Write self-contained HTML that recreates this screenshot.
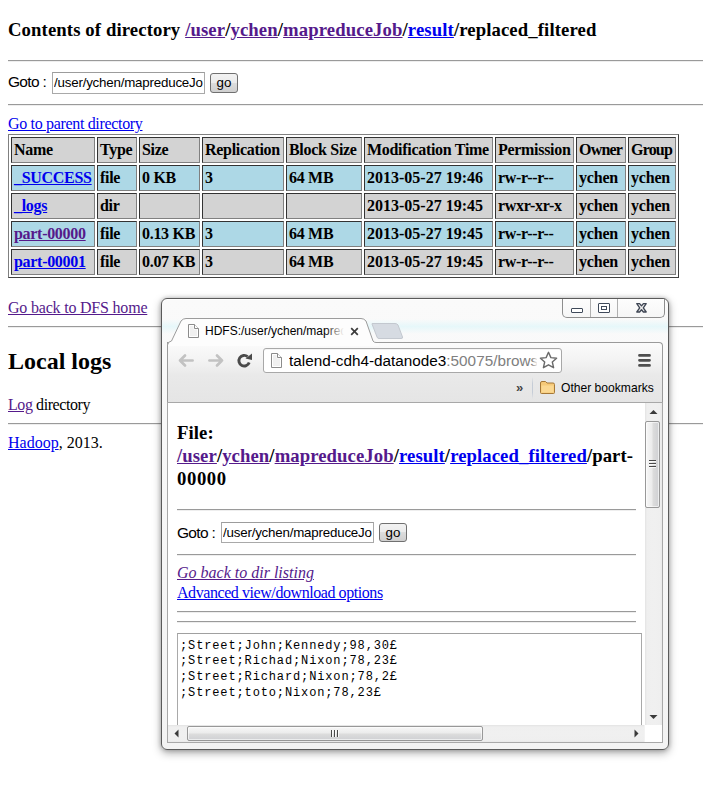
<!DOCTYPE html>
<html>
<head>
<meta charset="utf-8">
<style>
html,body{margin:0;padding:0;background:#fff;}
body{width:711px;height:787px;overflow:hidden;position:relative;font-family:"Liberation Serif",serif;font-size:16px;color:#000;}
a{color:#0000ee;text-decoration:underline;}
a.v{color:#551a8b;}
.abs{position:absolute;white-space:nowrap;}
.h3{font-size:18.72px;font-weight:bold;line-height:22px;}
.h2{font-size:24px;font-weight:bold;line-height:28px;}
.hr{position:absolute;height:0;border-top:1px solid #9a9a9a;border-bottom:1px solid #eeeeee;}
.t16{font-size:16px;line-height:20px;}
.sans{font-family:"Liberation Sans",sans-serif;}
.inp{position:absolute;box-sizing:border-box;border:1px solid #a9a9a9;border-top-color:#9c9c9c;background:#fff;font-family:"Liberation Sans",sans-serif;font-size:13.33px;line-height:20px;overflow:hidden;white-space:nowrap;padding-left:1px;letter-spacing:-0.2px;}
.btn{position:absolute;box-sizing:border-box;border:1px solid #707070;border-radius:3px;background:linear-gradient(#f2f2f2 0,#ebebeb 50%,#dddddd 50%,#cfcfcf 100%);font-family:"Liberation Sans",sans-serif;font-size:13.33px;text-align:center;line-height:18px;}
table.dt{position:absolute;left:8px;top:134px;table-layout:fixed;width:671px;border-collapse:separate;border-spacing:2px;border:1px solid;border-color:#808080 #404040 #404040 #808080;}
table.dt td{border:1px solid;border-color:#333 #808080 #808080 #333;padding:1px 2px 0 2px;height:26px;box-sizing:border-box;font-weight:bold;vertical-align:top;line-height:22px;white-space:nowrap;overflow:visible;letter-spacing:-0.3px;}
tr.g td{background:#d3d3d3;}
tr.b td{background:#add8e6;}
</style>
</head>
<body>
<!-- background page -->
<div class="abs h3" style="left:8px;top:19px;letter-spacing:0.11px;">Contents of directory <a class="v">/user</a>/<a class="v">ychen</a>/<a class="v">mapreduceJob</a>/<a>result</a>/replaced_filtered</div>
<div class="hr" style="left:8px;top:60px;width:695px;"></div>
<div class="abs sans" style="left:8px;top:72px;font-size:15.5px;line-height:20px;letter-spacing:-0.7px;">Goto :</div>
<div class="inp" style="left:52px;top:72px;width:153px;height:22px;"><div style="width:149px;overflow:hidden;">/user/ychen/mapreduceJob/result/replaced_filtered</div></div>
<div class="btn" style="left:210px;top:73px;width:28px;height:20px;">go</div>
<div class="hr" style="left:8px;top:104px;width:695px;"></div>
<div class="abs t16" style="left:8px;top:114px;letter-spacing:-0.33px;"><a>Go to parent directory</a></div>
<table class="dt">
<tr class="g"><td style="width:84px">Name</td><td style="width:40px">Type</td><td style="width:61px">Size</td><td style="width:82px">Replication</td><td style="width:76px">Block Size</td><td style="width:129px">Modification Time</td><td style="width:79px">Permission</td><td style="width:50px;letter-spacing:-0.8px">Owner</td><td style="width:48px;letter-spacing:-0.8px">Group</td></tr>
<tr class="b"><td><a>_SUCCESS</a></td><td>file</td><td>0 KB</td><td>3</td><td>64 MB</td><td style="letter-spacing:0px">2013-05-27 19:46</td><td>rw-r--r--</td><td style="letter-spacing:-0.2px">ychen</td><td style="letter-spacing:-0.2px">ychen</td></tr>
<tr class="g"><td><a>_logs</a></td><td>dir</td><td></td><td></td><td></td><td style="letter-spacing:0px">2013-05-27 19:45</td><td>rwxr-xr-x</td><td style="letter-spacing:-0.2px">ychen</td><td style="letter-spacing:-0.2px">ychen</td></tr>
<tr class="b"><td><a class="v">part-00000</a></td><td>file</td><td>0.13 KB</td><td>3</td><td>64 MB</td><td style="letter-spacing:0px">2013-05-27 19:45</td><td>rw-r--r--</td><td style="letter-spacing:-0.2px">ychen</td><td style="letter-spacing:-0.2px">ychen</td></tr>
<tr class="g"><td><a>part-00001</a></td><td>file</td><td>0.07 KB</td><td>3</td><td>64 MB</td><td style="letter-spacing:0px">2013-05-27 19:45</td><td>rw-r--r--</td><td style="letter-spacing:-0.2px">ychen</td><td style="letter-spacing:-0.2px">ychen</td></tr>
</table>
<div class="abs t16" style="left:8px;top:298px;letter-spacing:-0.2px;"><a class="v">Go back to DFS home</a></div>
<div class="hr" style="left:8px;top:326px;width:695px;"></div>
<div class="abs h2" style="left:8px;top:347px;">Local logs</div>
<div class="abs t16" style="left:8px;top:395px;letter-spacing:-0.42px;"><a class="v">Log</a> directory</div>
<div class="hr" style="left:8px;top:423px;width:695px;"></div>
<div class="abs t16" style="left:8px;top:433px;"><a>Hadoop</a>, 2013.</div>

<!-- chrome window -->
<div id="win" style="position:absolute;left:161px;top:298px;width:508px;height:452px;box-sizing:border-box;border:1px solid #5a5a5a;border-radius:6px;background:linear-gradient(#fafafa 0,#f6f6f6 60%,#f3f3f3 100%);box-shadow:inset 0 1px 0 #fff,0 3px 9px rgba(0,0,0,0.34),0 0 4px rgba(0,0,0,0.22);"></div>
<div style="position:absolute;left:162px;top:319px;width:506px;height:15px;background:linear-gradient(180deg,rgba(230,246,248,0) 0,rgba(228,247,250,0.9) 50%,rgba(230,246,248,0) 100%);"></div>
<!-- caption buttons -->
<div style="position:absolute;left:562px;top:299px;width:103px;height:19px;box-sizing:border-box;border:1px solid #8e8e8e;border-top:0;border-radius:0 0 5px 5px;background:linear-gradient(#fdfdfd,#f6f6f6);"></div>
<div style="position:absolute;left:590px;top:299px;width:1px;height:18px;background:#b0b0b0;"></div>
<div style="position:absolute;left:617px;top:299px;width:1px;height:18px;background:#b0b0b0;"></div>
<div style="position:absolute;left:571px;top:308px;width:12px;height:5px;box-sizing:border-box;border:1px solid #3f4a5a;border-radius:1px;background:#fff;"></div>
<div style="position:absolute;left:598px;top:303px;width:12px;height:10px;box-sizing:border-box;border:1px solid #3f4a5a;border-radius:1px;background:#fff;"></div>
<div style="position:absolute;left:601px;top:306px;width:6px;height:4px;box-sizing:border-box;border:1px solid #3f4a5a;"></div>
<svg style="position:absolute;left:635px;top:302px;" width="13" height="12" viewBox="0 0 13 12"><path d="M1.8 1.6 L4.6 1.6 L6.5 3.9 L8.4 1.6 L11.2 1.6 L8.3 5.8 L11.2 10 L8.4 10 L6.5 7.7 L4.6 10 L1.8 10 L4.7 5.8 Z" fill="#ececec" stroke="#3f4654" stroke-width="1.35" stroke-linejoin="round"/></svg>
<!-- toolbar -->
<div style="position:absolute;left:167px;top:342px;width:496px;height:61px;box-sizing:border-box;border:1px solid #9a9a9a;border-bottom:1px solid #a8a8a8;border-radius:0 4px 0 0;background:linear-gradient(#fbfbfb 0,#f3f3f3 30%,#e9e9e9 55%,#e5e5e5 100%);"></div>
<!-- tab -->
<svg style="position:absolute;left:160px;top:314px;" width="220" height="32" viewBox="0 0 220 32"><path d="M7.5 32 L7.5 31 Q8 27.5 11.5 27 L21 7 Q23 4.5 26 4.5 L201 4.5 Q204 4.5 206 7 L213 27.5 L219 27.5 L219 32 Z" fill="#fdfdfd" stroke="none"/><path d="M7.5 32 L7.5 31 Q8 27.5 11.5 27 L21 7 Q23 4.5 26 4.5 L201 4.5 Q204 4.5 206 7 L213 27 Q214 28.5 216 28.5 L220 28.5" fill="none" stroke="#9c9c9c" stroke-width="1"/></svg>
<!-- new tab -->
<svg style="position:absolute;left:368px;top:320px;" width="40" height="22" viewBox="0 0 40 22"><path d="M4 4 Q3.5 3.5 5 3.5 L27 3.5 Q29 3.5 30 5 L34.5 17 Q35 18.5 33 18.5 L11 18.5 Q9.5 18.5 9 17 Z" fill="#d6dbe2" stroke="#c3c8cf" stroke-width="1"/></svg>

<!-- tab content -->
<svg style="position:absolute;left:188px;top:324px;" width="11" height="14" viewBox="0 0 11 14"><path d="M0.5 0.5 H6.5 L10.5 4.5 V13.5 H0.5 Z" fill="#f0f0f0" stroke="#8c8c8c"/><path d="M1.5 1.5 H6 V5 H9.5 V12.5 H1.5 Z" fill="none" stroke="#fff"/><path d="M6.5 0.5 V4.5 H10.5" fill="#fff" stroke="#8c8c8c"/></svg>
<div style="position:absolute;left:205px;top:322px;width:140px;height:18px;overflow:hidden;white-space:nowrap;font-family:'Liberation Sans',sans-serif;font-size:12px;line-height:18px;color:#000;">HDFS:/user/ychen/mapreduceJob/result/replaced_filtered/part-00000</div>
<div style="position:absolute;left:325px;top:322px;width:21px;height:18px;background:linear-gradient(90deg,rgba(253,253,253,0),#fdfdfd 90%);"></div>
<svg style="position:absolute;left:350px;top:327px;" width="9" height="9" viewBox="0 0 9 9"><path d="M1.2 1.2 L7.8 7.8 M7.8 1.2 L1.2 7.8" stroke="#3c3c3c" stroke-width="1.7"/></svg>
<!-- nav icons -->
<svg style="position:absolute;left:177px;top:352px;" width="18" height="17" viewBox="0 0 18 17"><path d="M3 8.5 H15.6 M8 3.5 L3 8.5 L8 13.5" fill="none" stroke="#c2c2c2" stroke-width="2.7" stroke-linecap="round" stroke-linejoin="round"/></svg>
<svg style="position:absolute;left:207px;top:352px;" width="18" height="17" viewBox="0 0 18 17"><path d="M2.4 8.5 H15 M10 3.5 L15 8.5 L10 13.5" fill="none" stroke="#c2c2c2" stroke-width="2.7" stroke-linecap="round" stroke-linejoin="round"/></svg>
<svg style="position:absolute;left:236px;top:352px;" width="18" height="17" viewBox="0 0 18 17"><path d="M13.2 10.5 A5.3 5.3 0 1 1 11.6 4.6" fill="none" stroke="#4a4a4a" stroke-width="2.9"/><path d="M9.5 6.5 L16 1.5 L16 8 Z" fill="#4a4a4a"/></svg>
<!-- omnibox -->
<div style="position:absolute;left:263px;top:348px;width:299px;height:25px;box-sizing:border-box;border:1px solid #a8a8a8;border-radius:3px;background:#fff;box-shadow:inset 0 1px 0 rgba(0,0,0,0.04);"></div>
<svg style="position:absolute;left:271px;top:353px;" width="11" height="15" viewBox="0 0 11 15"><path d="M0.5 0.5 H6.5 L10.5 4.5 V14.5 H0.5 Z" fill="#f0f0f0" stroke="#8c8c8c"/><path d="M1.5 1.5 H6 V5 H9.5 V13.5 H1.5 Z" fill="none" stroke="#fff"/><path d="M6.5 0.5 V4.5 H10.5" fill="#fff" stroke="#8c8c8c"/></svg>
<div style="position:absolute;left:289px;top:351px;width:248px;height:20px;overflow:hidden;white-space:nowrap;font-family:'Liberation Sans',sans-serif;font-size:15.3px;line-height:20px;color:#000;">talend-cdh4-datanode3<span style="color:#808080">:50075/browseBlock.jsp?blockId=</span></div>
<div style="position:absolute;left:532px;top:351px;width:6px;height:20px;background:linear-gradient(90deg,rgba(255,255,255,0),#fff 95%);"></div>
<svg style="position:absolute;left:539px;top:351px;" width="19" height="19" viewBox="0 0 19 19"><path d="M9.5 1.3 L11.9 6.6 L17.6 7.2 L13.3 11 L14.6 16.7 L9.5 13.8 L4.4 16.7 L5.7 11 L1.4 7.2 L7.1 6.6 Z" fill="#fff" stroke="#6a6a6a" stroke-width="1.4" stroke-linejoin="round"/></svg>
<!-- menu -->
<svg style="position:absolute;left:637px;top:353px;" width="15" height="15" viewBox="0 0 15 15"><path d="M2.5 2.4 H12.5 M2.5 7.3 H12.5 M2.5 12.4 H12.5" stroke="#4e4e4e" stroke-width="2.8" stroke-linecap="round"/></svg>
<!-- bookmark bar -->
<div style="position:absolute;left:516px;top:378.5px;font-family:'Liberation Sans',sans-serif;font-size:13px;line-height:18px;color:#444;font-weight:bold;">&raquo;</div>
<div style="position:absolute;left:532px;top:377px;width:1px;height:22px;background:linear-gradient(rgba(200,210,220,0),#c5ccd6 30%,#c5ccd6 70%,rgba(200,210,220,0));"></div>
<svg style="position:absolute;left:539px;top:380px;" width="17" height="15" viewBox="0 0 17 15"><path d="M1.5 3 Q1.5 1.5 3 1.5 H6.5 L8 3 H14 Q15.5 3 15.5 4.5 V12.5 Q15.5 13.5 14.5 13.5 H2.5 Q1.5 13.5 1.5 12.5 Z" fill="#f6c978" stroke="#a57838" stroke-width="1"/><path d="M2.5 5.5 H14.5 V12.5 H2.5 Z" fill="#fbd892"/></svg>
<div style="position:absolute;left:561px;top:379px;font-family:'Liberation Sans',sans-serif;font-size:12.1px;line-height:18px;color:#000;white-space:nowrap;">Other bookmarks</div>

<!-- viewport -->
<div style="position:absolute;left:167px;top:402px;width:1px;height:341px;background:#a8a8a8;"></div>
<div style="position:absolute;left:662px;top:402px;width:1px;height:341px;background:#a8a8a8;"></div>
<div style="position:absolute;left:167px;top:742px;width:496px;height:1px;background:#a8a8a8;"></div>
<div id="vp" style="position:absolute;left:168px;top:403px;width:477px;height:322px;background:#fff;overflow:hidden;">
<div class="abs h3" style="left:9px;top:18px;line-height:23px;letter-spacing:0.08px;">File:<br><a class="v">/user</a>/<a class="v">ychen</a>/<a class="v">mapreduceJob</a>/<a>result</a>/<a>replaced_filtered</a>/part-<br><span style="letter-spacing:0.6px">00000</span></div>
<div class="hr" style="left:9px;top:106px;width:459px;"></div>
<div class="abs sans" style="left:9px;top:119.5px;font-size:15.5px;line-height:20px;letter-spacing:-0.7px;">Goto :</div>
<div class="inp" style="left:53px;top:119px;width:153px;height:21px;line-height:19px;"><div style="width:149px;overflow:hidden;">/user/ychen/mapreduceJob/result/replaced_filtered/part-00000</div></div>
<div class="btn" style="left:211px;top:120px;width:28px;height:19px;line-height:17px;">go</div>
<div class="hr" style="left:9px;top:151px;width:459px;"></div>
<div class="abs t16" style="left:9px;top:160px;"><a class="v"><i>Go back to dir listing</i></a></div>
<div class="abs t16" style="left:9px;top:180px;letter-spacing:-0.43px;"><a>Advanced view/download options</a></div>
<div class="hr" style="left:9px;top:208px;width:459px;"></div>
<div class="hr" style="left:9px;top:218px;width:459px;"></div>
<div style="position:absolute;left:9px;top:230px;width:465px;height:200px;box-sizing:border-box;border:1px solid #a9a9a9;border-top-color:#a0a0a0;padding:4.5px 2px;font-family:'Liberation Mono',monospace;font-size:12px;letter-spacing:0.87px;line-height:15.85px;white-space:pre;color:#000;">;Street;John;Kennedy;98,30&pound;
;Street;Richad;Nixon;78,23&pound;
;Street;Richard;Nixon;78,2&pound;
;Street;toto;Nixon;78,23&pound;</div>
</div>
<!-- vertical scrollbar -->
<div style="position:absolute;left:645px;top:403px;width:17px;height:322px;background:linear-gradient(90deg,#e3e3e3 0,#efefef 2px,#f0f0f0 50%,#efefef 15px,#e8e8e8 100%);"></div>
<svg style="position:absolute;left:649px;top:409px;" width="9" height="6" viewBox="0 0 9 6"><path d="M0.5 5 L4.5 1 L8.5 5 Z" fill="#3a3a3a"/></svg>
<svg style="position:absolute;left:649px;top:714px;" width="9" height="6" viewBox="0 0 9 6"><path d="M0.5 1 L8.5 1 L4.5 5 Z" fill="#3a3a3a"/></svg>
<div style="position:absolute;left:645px;top:421px;width:15px;height:87px;box-sizing:border-box;border:1px solid #989898;border-radius:2px;background:linear-gradient(90deg,#f7f7f7 0,#ececec 45%,#dcdcdc 55%,#cfd0d3 100%);box-shadow:inset 0 0 0 1px rgba(255,255,255,0.6);"></div>
<svg style="position:absolute;left:649px;top:459px;" width="8" height="9" viewBox="0 0 8 9"><path d="M0 1.5 H7 M0 4.5 H7 M0 7.5 H7" stroke="#4a4a4a" stroke-width="1"/><path d="M0 2.5 H7 M0 5.5 H7 M0 8.5 H7" stroke="#fff" stroke-width="1" opacity="0.8"/></svg>
<!-- horizontal scrollbar -->
<div style="position:absolute;left:168px;top:725px;width:476px;height:17px;background:linear-gradient(180deg,#e3e3e3 0,#efefef 2px,#f0f0f0 50%,#efefef 15px,#e8e8e8 100%);"></div>
<svg style="position:absolute;left:173px;top:729px;" width="7" height="9" viewBox="0 0 7 9"><path d="M5.5 0.5 L1.5 4.5 L5.5 8.5 Z" fill="#3a3a3a"/></svg>
<svg style="position:absolute;left:633px;top:729px;" width="7" height="9" viewBox="0 0 7 9"><path d="M1.5 0.5 L5.5 4.5 L1.5 8.5 Z" fill="#3a3a3a"/></svg>
<div style="position:absolute;left:187px;top:726px;width:296px;height:15px;box-sizing:border-box;border:1px solid #989898;border-radius:2px;background:linear-gradient(180deg,#f7f7f7 0,#ececec 45%,#dcdcdc 55%,#cfd0d3 100%);box-shadow:inset 0 0 0 1px rgba(255,255,255,0.6);"></div>
<svg style="position:absolute;left:330px;top:729px;" width="9" height="9" viewBox="0 0 9 9"><path d="M1.5 1 V8 M4.5 1 V8 M7.5 1 V8" stroke="#4a4a4a" stroke-width="1"/><path d="M2.5 1 V8 M5.5 1 V8 M8.5 1 V8" stroke="#fff" stroke-width="1" opacity="0.8"/></svg>
<div style="position:absolute;left:645px;top:725px;width:17px;height:17px;background:#fff;"></div>
</body>
</html>
